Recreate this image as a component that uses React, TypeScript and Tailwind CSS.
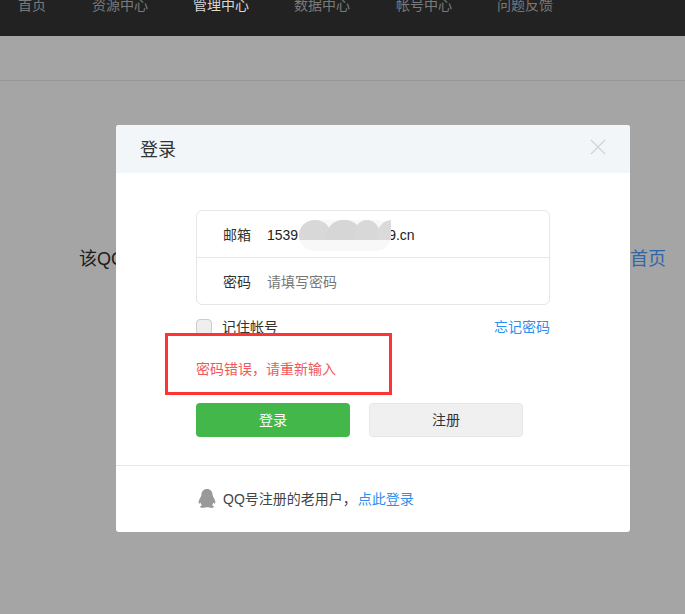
export default function App() {
  const font = { fontFamily: '"Liberation Sans", "Noto Sans CJK SC", sans-serif' };
  const nav = [
    ["首页", "w-[74px]", "text-[#7a7a7a]"],
    ["资源中心", "w-[101px]", "text-[#7a7a7a]"],
    ["管理中心", "w-[101px]", "text-[#d8d8d8]"],
    ["数据中心", "w-[102px]", "text-[#7a7a7a]"],
    ["帐号中心", "w-[101px]", "text-[#7a7a7a]"],
    ["问题反馈", "w-[100px]", "text-[#7a7a7a]"],
  ];
  return (
    <div style={font} className="relative h-[614px] w-[685px] overflow-hidden bg-[#a5a5a5]">
      <header className="flex h-9 overflow-hidden bg-[#222222] pl-[18px]">
        {nav.map(([t, w, c]) => (
          <span key={t} className={`-mt-[7px] h-6 text-sm leading-6 ${w} ${c}`}>{t}</span>
        ))}
      </header>
      <div className="h-[45px] border-b border-[#969696]" />
      <div className="flex h-[354px] items-center justify-between pt-[2px] pr-[19px] pl-[79px] text-lg text-[#1c1c1c]">
        <span>该QQ</span>
        <span className="text-[#2f66a8]">首页</span>
      </div>

      <div className="absolute top-[125px] left-[116px] h-[407px] w-[514px] overflow-hidden rounded-[3px] bg-white">
        <div className="relative flex h-12 items-center bg-[#f2f6f9] pt-px pl-6 text-lg text-[#333333]">
          登录
          <svg className="absolute top-[14px] right-6 h-4 w-4" viewBox="0 0 16 16" fill="none" stroke="#d2d2d2" strokeWidth="1.2">
            <path d="M1 1 15 15M15 1 1 15" />
          </svg>
        </div>

        <div className="mt-[37px] ml-20 w-[354px] rounded-md border border-[#e6e6e6] text-sm text-[#333333]">
          <div className="relative flex h-[47px] items-center border-b border-[#e6e6e6] pt-px pl-[26px]">
            <span className="w-11">邮箱</span>
            <span className="text-[#222222]">1539</span>
            <span className="ml-[90px] text-[#222222]">9.cn</span>
            <div className="absolute top-[9px] left-[102px] h-[31px] w-[92px] rounded-[15px] bg-[#f8f8f8]" />
            <div className="absolute top-[9px] left-[102px] flex h-5 w-[92px] overflow-hidden">
              <span className="h-[31px] w-[32px] shrink-0 rounded-full bg-[#d8d8d8]" />
              <span className="-ml-[4px] h-[31px] w-[34px] shrink-0 rounded-full bg-[#d6d6d6]" />
              <span className="-ml-[6px] h-[31px] w-[24px] shrink-0 rounded-full bg-[#d8d8d8]" />
              <span className="-ml-[2px] h-[31px] w-[30px] shrink-0 rounded-full bg-[#dadada]" />
            </div>
          </div>
          <div className="flex h-[46px] items-center pt-px pl-[26px]">
            <span className="w-11">密码</span>
            <span className="text-[#777777]">请填写密码</span>
          </div>
        </div>

        <div className="mt-3 ml-20 flex w-[354px] items-center justify-between text-sm">
          <label className="flex items-center text-[#333333]">
            <span className="mr-[10px] h-4 w-4 rounded-sm border border-[#cccccc] bg-[#efefef]" />
            记住帐号
          </label>
          <a className="text-[#2b8ff0]">忘记密码</a>
        </div>

        <p className="mt-[22px] ml-20 h-5 text-sm leading-5 text-[#f0595c]">密码错误，请重新输入</p>

        <div className="mt-[24px] ml-20 flex gap-[19px] text-sm">
          <button className="h-[34px] w-[154px] rounded-sm bg-[#43b74a] text-white">登录</button>
          <button className="h-[34px] w-[154px] rounded-sm border border-[#e6e6e6] bg-[#f0f0f0] text-[#333333]">注册</button>
        </div>

        <div className="mt-7 flex h-[67px] items-center border-t border-[#e6e6e6] pl-[82px] text-sm text-[#444444]">
          <svg className="mr-[7px] h-[20px] w-[18px]" viewBox="0 0 18 20" fill="#999999">
            <path d="M9 0C5.500 0 3.600 2.500 3.400 5.800 3.300 7.200 2.700 8 2 9.200.8 11.200.3 13 .8 14.300c.4.700 1.100.3 1.700-.7.200 1.100.7 2 1.500 2.700-1.200.4-2 1-1.800 1.700.3.900 2.400 1.100 4 .8.800-.2 1.300-.5 2.800-.5s2 .3 2.800.5c1.600.3 3.700.1 4-.8.200-.7-.6-1.300-1.800-1.700.8-.7 1.300-1.600 1.500-2.700.6 1 1.300 1.400 1.700.7.500-1.300 0-3.100-1.200-5.100-.7-1.200-1.300-2-1.400-3.400C14.400 2.500 12.500 0 9 0Z" />
          </svg>
          <span className="mr-px">QQ号注册的老用户，</span>
          <a className="text-[#2b8ff0]">点此登录</a>
        </div>
      </div>

      <div className="absolute top-[333px] left-[165px] h-[62px] w-[227px] border-[3px] border-[#ff3333]" />
    </div>
  );
}
